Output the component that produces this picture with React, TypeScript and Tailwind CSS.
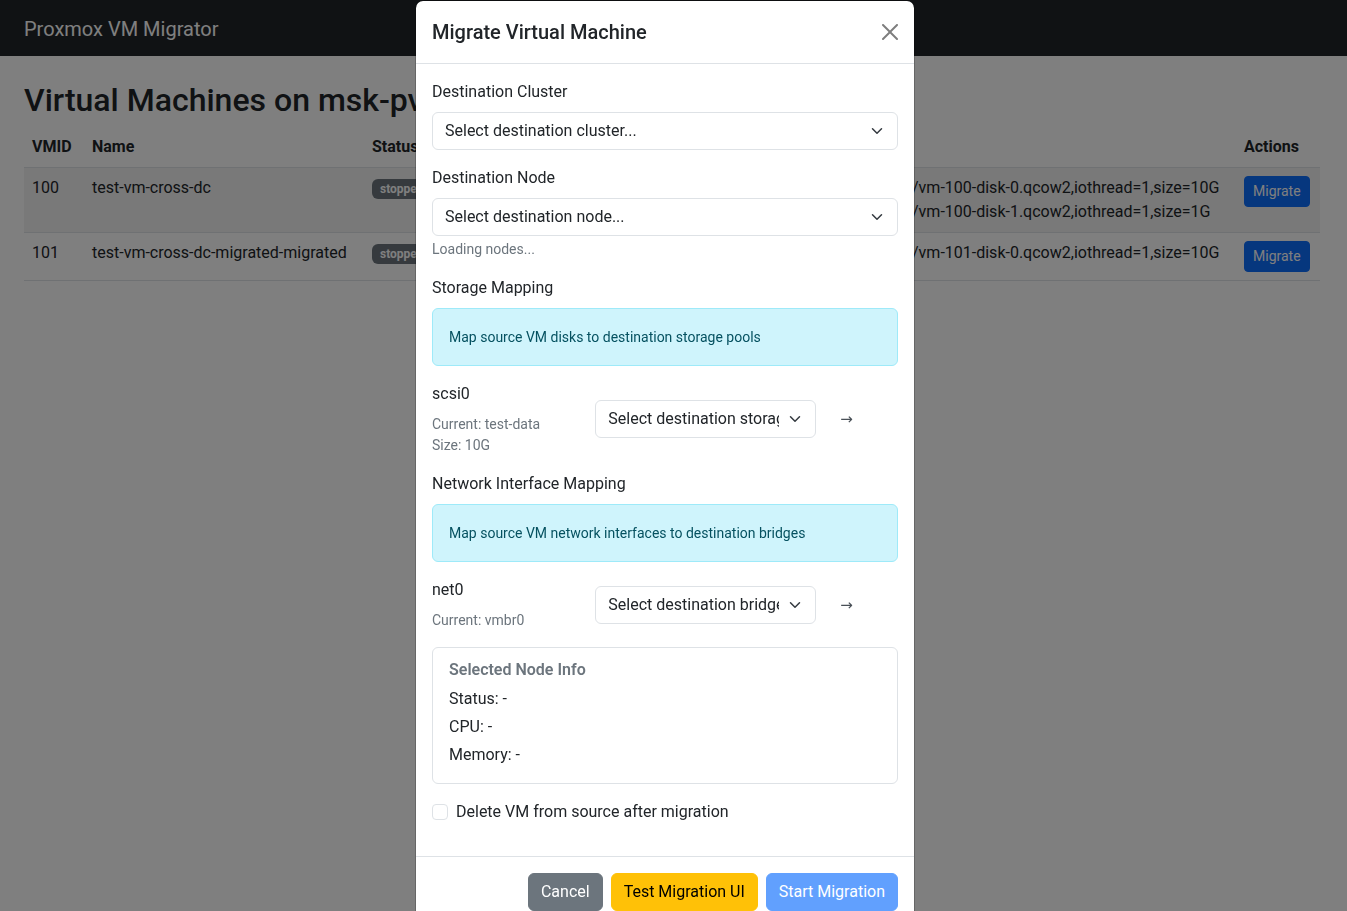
import React from 'react';

type Vm = {
  id: number;
  name: string;
  status: string;
  node: string;
  memory: string;
  disks: string[];
};

const VMS: Vm[] = [
  {
    id: 100,
    name: 'test-vm-cross-dc',
    status: 'stopped',
    node: 'msk-pve01',
    memory: '2048 MB',
    disks: [
      'scsi0: test-data:100/vm-100-disk-0.qcow2,iothread=1,size=10G',
      'scsi1: test-data:100/vm-100-disk-1.qcow2,iothread=1,size=1G',
    ],
  },
  {
    id: 101,
    name: 'test-vm-cross-dc-migrated-migrated',
    status: 'stopped',
    node: 'msk-pve01',
    memory: '2048 MB',
    disks: ['scsi0: test-data:101/vm-101-disk-0.qcow2,iothread=1,size=10G'],
  },
];

const Chevron = () => (
  <svg className="h-3 w-4 shrink-0" viewBox="0 0 16 16" fill="none">
    <path d="m2 5 6 6 6-6" stroke="#343a40" strokeWidth="2" strokeLinecap="round" strokeLinejoin="round" />
  </svg>
);

const Select = ({ text }: { text: string }) => (
  <div className="flex h-[38px] items-center gap-2 rounded-[6px] border border-[#dee2e6] bg-white pl-3 pr-3 text-base text-[#212529]">
    <span className="min-w-0 flex-1 overflow-hidden whitespace-nowrap">{text}</span>
    <Chevron />
  </div>
);

const Label = ({ children }: { children: React.ReactNode }) => (
  <div className="mb-2 leading-6 text-[#212529]">{children}</div>
);

const Info = ({ children }: { children: React.ReactNode }) => (
  <div className="mb-4 rounded-[6px] border border-[#9eeaf9] bg-[#cff4fc] p-4 leading-6 text-[#055160]">
    <span className="text-sm">{children}</span>
  </div>
);

const MappingRow = ({ name, lines, placeholder }: { name: string; lines: string[]; placeholder: string }) => (
  <div className="-mx-3 mb-4 flex items-center">
    <div className="w-4/12 px-3">
      <div className="mb-2 leading-6 text-[#212529]">{name}</div>
      {lines.map((l) => (
        <div key={l} className="text-sm leading-[21px] text-[#6c757d]">
          {l}
        </div>
      ))}
    </div>
    <div className="w-6/12 px-3">
      <Select text={placeholder} />
    </div>
    <div className="w-2/12 px-3 font-['DejaVu_Sans',sans-serif] text-[15px] leading-6 text-[#495057]">→</div>
  </div>
);

const Badge = ({ text }: { text: string }) => (
  <span className="inline-block rounded-[6px] bg-[#6c757d] px-[8px] py-[4px] text-xs font-bold leading-3 text-white">
    {text}
  </span>
);

export default function App() {
  return (
    <div className="relative min-h-screen bg-white font-['Roboto','Liberation_Sans',sans-serif] text-base text-[#212529]">
      <nav className="flex h-14 items-center bg-[#212529] px-6 pt-0.5">
        <span className="text-xl leading-[30px] text-white">Proxmox VM Migrator</span>
      </nav>

      <main className="px-6 pt-[25px]">
        <h2 className="mb-2 text-[32px] font-medium leading-[38.4px]">Virtual Machines on msk-pve01</h2>
        <table className="w-[1296px] table-fixed border-collapse text-left">
          <colgroup>
            <col className="w-[60px]" />
            <col className="w-[280px]" />
            <col className="w-[96px]" />
            <col className="w-[160px]" />
            <col className="w-[140px]" />
            <col className="w-[476px]" />
            <col className="w-[84px]" />
          </colgroup>
          <thead>
            <tr className="border-b border-[#dee2e6]">
              <th className="p-2 leading-6 font-bold">VMID</th>
              <th className="p-2 leading-6 font-bold">Name</th>
              <th className="p-2 leading-6 font-bold">Status</th>
              <th className="p-2 leading-6 font-bold">Node</th>
              <th className="p-2 leading-6 font-bold">Memory</th>
              <th className="p-2 leading-6 font-bold">Disks</th>
              <th className="p-2 leading-6 font-bold">Actions</th>
            </tr>
          </thead>
          <tbody>
            {VMS.map((vm, i) => (
              <tr key={vm.id} className={`border-b border-[#dee2e6] align-top ${i % 2 === 0 ? 'bg-[#f2f2f2]' : ''}`}>
                <td className="p-2 leading-6">{vm.id}</td>
                <td className="p-2 leading-6">{vm.name}</td>
                <td className="p-2 leading-6">
                  <Badge text={vm.status} />
                </td>
                <td className="p-2 leading-6">{vm.node}</td>
                <td className="p-2 leading-6">{vm.memory}</td>
                <td className="p-2 leading-6">
                  {vm.disks.map((d) => {
                    const cut = d.indexOf('/');
                    return (
                      <div key={d} className="whitespace-nowrap">
                        <span className="inline-block w-[144px] overflow-hidden align-top">{d.slice(0, cut)}</span>
                        {d.slice(cut)}
                      </div>
                    );
                  })}
                </td>
                <td className="p-2 leading-6">
                  <button className="rounded-[4px] border border-[#0d6efd] bg-[#0d6efd] px-2 py-1 text-sm leading-[21px] text-white">
                    Migrate
                  </button>
                </td>
              </tr>
            ))}
          </tbody>
        </table>
      </main>

      {/* modal backdrop */}
      <div className="fixed inset-0 overflow-hidden bg-black/50">
        <div className="ml-[415px] w-[500px] rounded-[8px] border border-black/20 bg-white bg-clip-padding">
          <div className="flex items-center justify-between border-b border-[#dee2e6] p-4">
            <h5 className="text-xl font-medium leading-[30px]">Migrate Virtual Machine</h5>
            <svg className="h-4 w-4 opacity-50" viewBox="0 0 16 16">
              <path d="M.293.293a1 1 0 0 1 1.414 0L8 6.586 14.293.293a1 1 0 1 1 1.414 1.414L9.414 8l6.293 6.293a1 1 0 0 1-1.414 1.414L8 9.414l-6.293 6.293a1 1 0 0 1-1.414-1.414L6.586 8 .293 1.707a1 1 0 0 1 0-1.414" />
            </svg>
          </div>

          <div className="p-4">
            <div className="mb-4">
              <Label>Destination Cluster</Label>
              <Select text="Select destination cluster..." />
            </div>
            <div className="mb-4">
              <Label>Destination Node</Label>
              <Select text="Select destination node..." />
              <div className="mt-[3px] text-sm leading-[21px] text-[#6c757d]">Loading nodes...</div>
            </div>

            <Label>Storage Mapping</Label>
            <Info>Map source VM disks to destination storage pools</Info>
            <MappingRow name="scsi0" lines={['Current: test-data', 'Size: 10G']} placeholder="Select destination storage..." />

            <Label>Network Interface Mapping</Label>
            <Info>Map source VM network interfaces to destination bridges</Info>
            <MappingRow name="net0" lines={['Current: vmbr0']} placeholder="Select destination bridge..." />

            <div className="mb-4 rounded-[6px] border border-[#dee2e6] px-4 pb-4 pt-3">
              <h6 className="mb-2 font-semibold leading-[19.2px] text-[#6c757d]">Selected Node Info</h6>
              <p className="mb-1 leading-6">Status: -</p>
              <p className="mb-1 leading-6">CPU: -</p>
              <p className="leading-6">Memory: -</p>
            </div>

            <label className="mb-4 flex items-center gap-2 leading-6">
              <span className="h-4 w-4 rounded-[4px] border border-[#dee2e6] bg-white" />
              <span>Delete VM from source after migration</span>
            </label>
          </div>

          <div className="flex justify-end gap-2 border-t border-[#dee2e6] px-4 py-4">
            <button className="rounded-[6px] border border-[#6c757d] bg-[#6c757d] px-3 py-1.5 leading-6 text-white">Cancel</button>
            <button className="rounded-[6px] border border-[#ffc107] bg-[#ffc107] px-3 py-1.5 leading-6 text-black">
              Test Migration UI
            </button>
            <button className="rounded-[6px] border border-[#0d6efd] bg-[#0d6efd] px-3 py-1.5 leading-6 text-white opacity-65">
              Start Migration
            </button>
          </div>
        </div>
      </div>
    </div>
  );
}
